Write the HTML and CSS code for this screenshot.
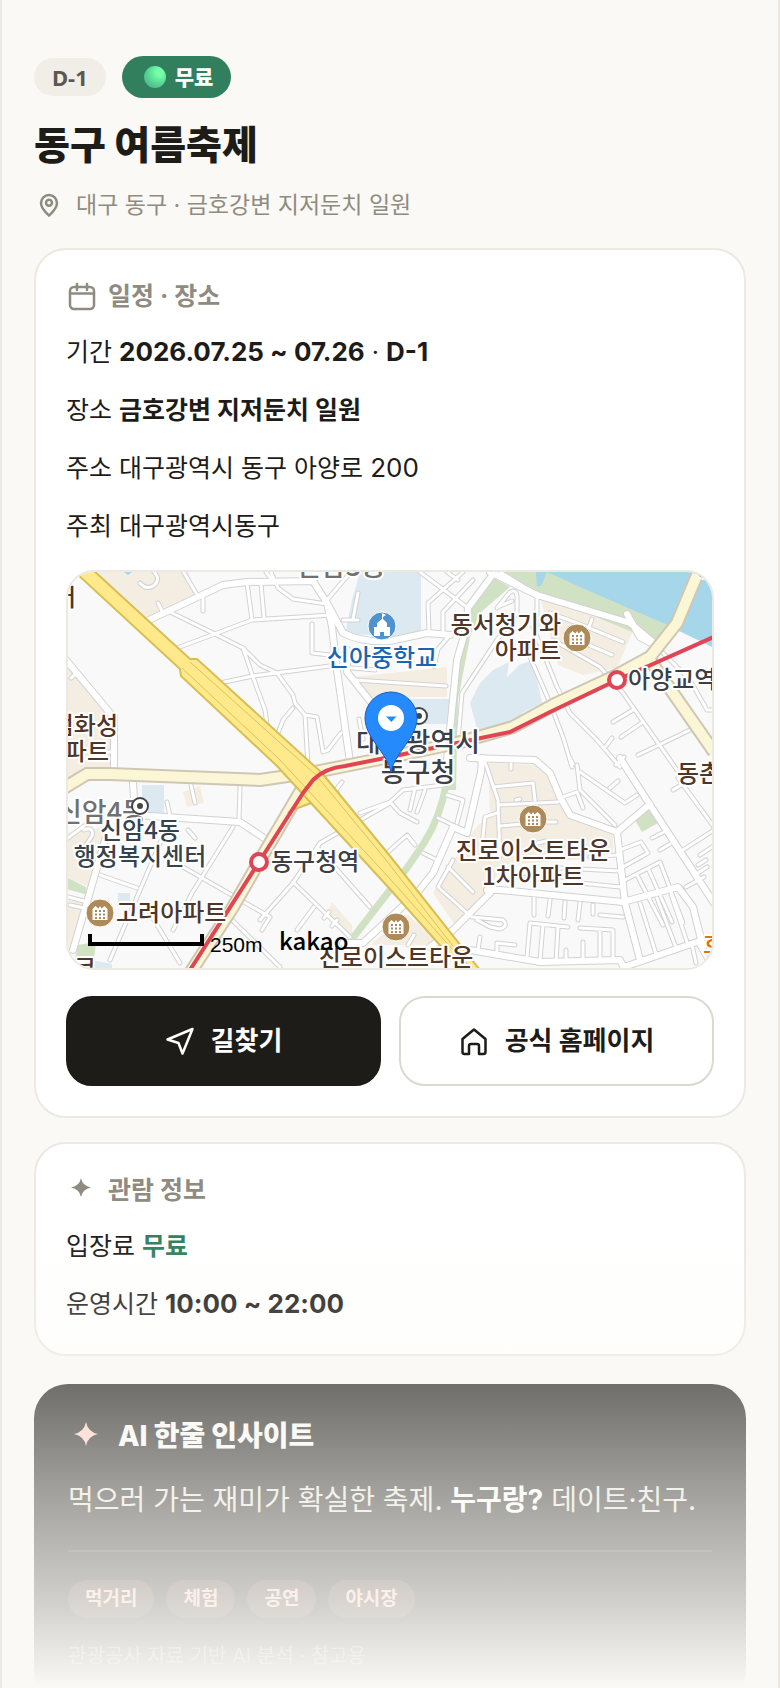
FILE: index.html
```html
<!DOCTYPE html>
<html lang="ko">
<head>
  <meta charset="UTF-8">
  <title>동구 여름축제</title>
  <meta name="viewport" content="width=device-width, initial-scale=1">
  <link rel="stylesheet" href="styles.css">
</head>
<body>
  <main class="app">
    <header class="hero">
      <div class="badges">
        <span class="badge">D-1</span>
        <span class="badge badge-free"><span class="orb"></span>무료</span>
      </div>
      <h1>동구 여름축제</h1>
      <p class="location">
        <svg class="icon-pin" viewBox="0 0 24 24" aria-hidden="true"><path d="M12 20.5c-2.4-2.2-6.4-6-6.4-10.100a6.400 6.400 0 0 1 12.800 0c0 4.100-4 7.900-6.400 10.100z"/><circle cx="12" cy="10.200" r="2.400"/></svg>
        대구 동구 · 금호강변 지저둔치 일원
      </p>
    </header>

    <section class="card">
      <h2>
        <svg class="icon" viewBox="0 0 30 30" aria-hidden="true"><rect x="4" y="6" width="24" height="22" rx="4"/><path d="M4 12.500h24M11 3v6M21 3v6"/></svg>
        일정 · 장소
      </h2>
      <p>기간 <b class="num">2026.07.25 ~ 07.26</b> · <b class="num">D-1</b></p>
      <p>장소 <b>금호강변 지저둔치 일원</b></p>
      <p>주소 대구광역시 동구 아양로 <span class="num">200</span></p>
      <p>주최 대구광역시동구</p>

      <div class="map">
        <svg viewBox="68 572 644 396" preserveAspectRatio="xMidYMid slice">
          <defs>
            <g id="lanes">
              <path d="M140 583q6 7 13 3q6-4 4-10l-5-7M183 571l13 22M203 595v16M158 603l4 8M168 611l45 22l30 15l17 17l17 8l16 22l2 8l10 12l3 50"/>
              <path d="M177 648l75-28l80-5M247 583l5 37M261 584l3 33M271 572l7 16l15 11l34 5M266 572l7 9M350 573l-23 27M220 683l33-7l77-10l45 4"/>
              <path d="M243 648l10 29l12 33l2 14M312 624v29l18 2M358 593l-5 26M343 620h15M293 708l-10 12l-5 13M305 715l12 2l6 35l5-2l13-17M355 680l91 6M359 719l4 20"/>
              <path d="M77 673l-6 5M114 752h-10M420 572l48 36M463 572l-35 31l1 29M473 580l-30 32v21M447 572l11 8M500 572l33 20M450 635l-12 14l-4 18"/>
              <path d="M537 593v34l-7 30l20 46l13 34l9 30M533 627l24 60l13 26l27 27l23 27M497 608l13-16q6-3 7 4v17l-20 27l-35 53l-4 47M512 601l-12 5"/>
              <path d="M550 613l27 10l46 19M592 619l-3 8M553 640l47 27l23 26l54 77M577 640l35 15M663 653l27 27l17 30h8M613 722l20-12M621 737l22-15M638 755l52-25M606 746l6-8M616 765l8-8"/>
              <path d="M240 787l-1 33M191 785l4 18M167 802l3 14M233 827l-41 66l-19 37M170 820l-30 70l-30 70M183 867l87 50l-8 13M100 875l37 13M145 905l35 58M227 915l53 52M390 803l-70 40l-27 40l-33 37M293 882l57 55M317 847l53 60M188 830l7 8M314 907l-17 23M329 912l-5 6M337 920l-5 6"/>
              <path d="M360 813l30-11l13-12l40-5M390 802l10 11l17 9M415 788l-5 22M425 790l-8 22M447 795l16 5l-6 23M438 818l25 12M387 853l20-18l8 10M423 853l12 6M453 860l-15 27l29 26M448 867l25 25M340 800l-4-10l6-8"/>
              <path d="M485 762l13 38l2 57M493 787l40-4l2 17M498 805l60-3M500 826l24-2M547 822h9M483 837l2-20l12-4M511 764v5M516 800l4-1M577 765l3 25l35 35M580 772l45 31l12-8M610 788l8-7M563 797l14-5l6 16M570 758l3 6"/>
              <path d="M673 790l41-25M678 778l36 49M683 850l31-20M652 838l12-6M660 850l10-6M620 850l21-8l7 11l-25 14M625 880l35-18l23 61M637 875l26 50M648 868l24 54M520 877l100 10M590 857l27-2M560 868l60 3M575 843l8-4M538 843l8-2M686 887l18-10M700 855l12-8M698 865l8-5M695 875l12-8"/>
              <path d="M534 898v17M550 900l-2 16M565 902l-1 16M580 903l-2 17M593 905v9M600 915l23 2M527 957l3-34l38 4M543 925l-3 35M558 927l-2 35M472 917l31 3q6 6-3 9l-10-2l-13-7M580 928l33 2v27M600 930v30M480 937l-2 13M497 955v-12l18 2M583 942v16M566 950v10"/>
              <path d="M640 903l17 54M657 898l20 52M671 894l16 48M697 942l15 26M692 945l4 18M408 945l6-10M70 905l14 3M68 897l16 4M84 830q10-4 8 6l-8 12M68 838l16-12"/>
            </g>
            <g id="streets">
              <path d="M147 621l76-36l24-3l66-1l14 22l5 24l5 43l13 92M327 603l16 30q20 10 47 8l37-8l23 2M347 650v22l27 34M66 660l44 53l4 4v53M491 577l-23 31l-1 17l-10 35l-7 70l-4 40"/>
              <path d="M490 572l47 23l93 28l30 25M627 614l13 23l15 8M133 783l2 32l105 7l27 18M105 840l-32 110M482 758l-1 14l-14 61l-14-6l-20 46l-16 20l-54 50h-20M487 890h13l123 12l55-15l15 20l10 40M490 893l-37 37l-23 17"/>
              <path d="M470 758l65 2l15 13l10 24l10 18l47 17l8 71l15 57M617 832l33-28M620 758l30 47l64 98M470 950l70 12l80-2l4 8M624 967l73-25"/>
            </g>
            <g id="avenues">
              <path d="M700 568l-23 55l-27 34l-33 18l-60 28l-44 24l-56 16l-67 14l-75 15l-55 8l-150-6h-23l-23 14M650 660l64 92M303 787l-43 73l-27 47l-43 66"/>
            </g>
            <g id="apartment">
              <circle r="14"/>
              <path d="M-7.500 7v-11l3-3l3 2.500l1.500-2.500l1.500 2.500l3-2.500l3 3v11z"/>
              <path class="windows" d="M-5-2h10M-5 1.500h10M-5 5h10"/>
            </g>
          </defs>

          <rect class="ground" x="60" y="560" width="660" height="420"/>
          <path class="block" d="M93 572h95l9 21l-50 27zM66 663l44 50l4 57l-48 14zM66 833l38-6v33l-14 27l-24-10zM66 900l20 3l-10 44l-10 13zM183 792l17-6l4 17l-17 4zM332 902l20 23v18l-25-30zM353 677l94-10v30h-75zM540 597l93 34l-16 37l-34 7l-25-10z"/>
          <path class="block" d="M488 763l52 2l13 15l7 20l12 20l41 15v22l-113 8l-10 28l-35 32l-22-32l7-13l38-55l12-8zM372 943l36-28l34 30h-70z"/>
          <path class="campus" d="M360 572h61v65l-76-3l7-34zM400 699h50v25h-50zM480 683l13-13l16-8l-2 15l12-12l14-5l9 43l-20 10v12l-44 7l-8-29zM142 785h22v30h-22zM118 893h12v14h-12zM92 960l20 4v6h-20z"/>
          <path class="park" d="M500 572h50l117 53l-10 17l-120-49zM492 577l18 10l-30 26l-10 24l-12 63l-2 90h-9l3-55l5-45l13-75zM635 820l15-12l8 15l-16 9zM66 877l20 10l2 8l-22-6zM78 945l18-3l-3 26h-20z"/>
          <path class="greenway" d="M446 785q-6 33-22 58l-17 25l-55 71"/>
          <path class="river" d="M547 572h167v76l-47-23l-87-38zM536 572h11l-6 14h-4zM124 572h8l-4 3z"/>

          <use class="lane-edge" href="#lanes"/>
          <use class="street-edge" href="#streets"/>
          <use class="lane" href="#lanes"/>
          <use class="street" href="#streets"/>
          <use class="avenue-edge" href="#avenues"/>
          <use class="avenue" href="#avenues"/>

          <path class="ramp" d="M290 811q10-4 30-11l-4-16l-14 12z"/>
          <path class="highway" d="M93 570l97 89h7l125 114l68 83l90 114h-18l-73-82l-112-122l-96-90l-1-7l-104-96z"/>
          <path class="highway-line" d="M190 662l126 113l70 85l84 108M182 668l98 92l112 121l76 86"/>
          <path class="subway" d="M716 636l-99 44l-67 32l-40 20l-53 11l-67 14l-45 9q-20 2-32 14l-10 13l-44 69l-69 108"/>
          <circle class="station" cx="259" cy="862" r="8"/>
          <circle class="station" cx="617" cy="680" r="8"/>

          <g class="label district">
            <text x="341" y="576" text-anchor="middle">신암3동</text>
            <text x="57" y="822">신암4동</text>
          </g>
          <g class="spot">
            <circle cx="140" cy="806" r="8"/><circle class="dot" cx="140" cy="806" r="3"/>
            <circle cx="419" cy="716" r="8"/><circle class="dot" cx="419" cy="716" r="3"/>
          </g>
          <g class="label">
            <text x="628" y="688">아양교역</text>
            <text x="271" y="870">동구청역</text>
            <text x="695" y="575">동구</text>
          </g>
          <g class="label office" text-anchor="middle">
            <text x="140" y="839">신암4동</text>
            <text x="140" y="865">행정복지센터</text>
          </g>
          <g class="label cityhall" text-anchor="middle">
            <text x="418" y="752">대구광역시</text>
            <text x="418" y="782">동구청</text>
          </g>
          <g class="label home">
            <text x="561" y="633" text-anchor="end">동서청기와</text>
            <text x="561" y="659" text-anchor="end">아파트</text>
            <text x="118" y="734" text-anchor="end">점화성</text>
            <text x="109" y="760" text-anchor="end">파트</text>
            <text x="76" y="606" text-anchor="end">어</text>
            <text x="116" y="921">고려아파트</text>
            <text x="396" y="966" text-anchor="middle">진로이스트타운</text>
            <text x="533" y="859" text-anchor="middle">진로이스트타운</text>
            <text x="533" y="885" text-anchor="middle">1차아파트</text>
            <text x="677" y="782">동촌</text>
            <text x="74" y="976">크</text>
          </g>
          <text class="label school-name" x="382" y="666" text-anchor="middle">신아중학교</text>
          <text class="label food" x="703" y="953">호</text>

          <g class="apartment">
            <use href="#apartment" transform="translate(577 638)"/>
            <use href="#apartment" transform="translate(533 819)"/>
            <use href="#apartment" transform="translate(396 927)"/>
            <use href="#apartment" transform="translate(100 913)"/>
          </g>
          <g class="school">
            <circle cx="382" cy="626" r="14"/>
            <path d="M374 636v-9h3v-4l5-4v-6l4 2l-3 2v2l4 4v4h3v9h-6v-4h-4v4z"/>
          </g>

          <path class="scale" d="M90 934v10h112v-10"/>
          <text class="scale-text" x="210" y="952">250m</text>
          <text class="brand" x="279" y="950">kakao</text>

          <path class="marker" d="M391 772c-4-20-26-34-26-54a26 26 0 0 1 52 0c0 20-22 34-26 54z"/>
          <circle class="marker-hole" cx="391" cy="718" r="13"/>
          <path class="marker-arrow" d="M386 716.500h10.500l-5.200 5.500z"/>
        </svg>
      </div>

      <div class="actions">
        <button class="btn btn-dark" type="button">
          <svg class="icon" viewBox="0 0 30 30" aria-hidden="true"><path d="M27.500 3L2.500 13.500l11 3.500l4 10.500z"/></svg>
          길찾기
        </button>
        <button class="btn" type="button">
          <svg class="icon" viewBox="0 0 30 30" aria-hidden="true"><path d="M3.500 13L15 3.500L26.500 13v13a2 2 0 0 1-2 2h-4.500v-8a2 2 0 0 0-2-2h-6a2 2 0 0 0-2 2v8h-4.500a2 2 0 0 1-2-2z"/></svg>
          공식 홈페이지
        </button>
      </div>
    </section>

    <section class="card">
      <h2>
        <svg class="icon star" viewBox="0 0 30 30" aria-hidden="true"><path d="M15 3q1.500 8 10 9.500q-8.500 1.500-10 9.500q-1.500-8-10-9.500q8.500-1.500 10-9.500z"/></svg>
        관람 정보
      </h2>
      <p>입장료 <b class="free">무료</b></p>
      <p>운영시간 <b class="num">10:00 ~ 22:00</b></p>
    </section>

    <section class="insight">
      <h2>
        <svg class="star" viewBox="0 0 36 36" aria-hidden="true"><path d="M18 4q2 10 12 12q-10 2-12 12q-2-10-12-12q10-2 12-12z"/></svg>
        AI 한줄 인사이트
      </h2>
      <p class="summary">먹으러 가는 재미가 확실한 축제. <b>누구랑?</b> 데이트·친구.</p>
      <ul class="tags">
        <li>먹거리</li>
        <li>체험</li>
        <li>공연</li>
        <li>야시장</li>
      </ul>
      <p class="source">관광공사 자료 기반 AI 분석 · 참고용</p>
    </section>
    <div class="fade"></div>
  </main>
</body>
</html>
```

FILE: styles.css
```css
:root {
  --bg: #faf9f5;
  --ink: #1e1c18;
  --muted: #8f8b80;
  --line: #ebe9e2;
  --green: #317f5d;
}

* { box-sizing: border-box; }

body {
  margin: 0;
  font-family: Inter, "Noto Sans CJK KR", sans-serif;
  font-size: 25px;
  line-height: 40px;
  background: var(--bg);
  color: var(--ink);
}

h1, h2, p, ul { margin: 0; }

b { font-weight: 700; }

.app {
  position: relative;
  height: 100vh;
  overflow: hidden;
  padding: 56px 32px 0;
  border: solid var(--line);
  border-width: 0 2px;
}

.badges {
  display: flex;
  align-items: center;
  gap: 16px;
}

.badge {
  padding: 0 18px;
  border-radius: 20px;
  background: #f0eee7;
  color: #5c5850;
  font-family: "Noto Sans", "Noto Sans CJK KR", sans-serif;
  font-size: 22px;
  font-weight: 700;
  line-height: 38px;
}

.badge-free {
  display: flex;
  align-items: center;
  gap: 9px;
  padding: 0 18px 0 22px;
  border-radius: 21px;
  background: var(--green);
  color: #fff;
  font-size: 21px;
  font-weight: 800;
  line-height: 42px;
}

.orb {
  width: 22px;
  height: 22px;
  border-radius: 50%;
  background: radial-gradient(circle at 70% 30%, #74ffa8 15%, #58d894 50%, #4b9f8b 100%);
}

h1 {
  margin-top: 22px;
  font-size: 39px;
  font-weight: 800;
  line-height: 50px;
}

.location {
  display: flex;
  align-items: center;
  gap: 12px;
  margin: 18px 0 26px;
  color: var(--muted);
  font-size: 23px;
  line-height: 34px;
}

.icon-pin, .icon {
  width: 30px;
  height: 30px;
  fill: none;
  stroke: currentColor;
  stroke-width: 2;
  stroke-linejoin: round;
  stroke-linecap: round;
}

.icon { stroke-width: 2.500; }

.card {
  display: flex;
  flex-direction: column;
  gap: 18px;
  margin-bottom: 24px;
  padding: 28px 30px 30px;
  border: 2px solid var(--line);
  border-radius: 32px;
  background: #fff;
}

.card h2 {
  display: flex;
  align-items: center;
  gap: 12px;
  color: var(--muted);
  font-size: 25px;
  font-weight: 700;
  line-height: 36px;
}

.star, .icon.star {
  fill: currentColor;
  stroke: none;
}

.num { font-size: 26px; }

.free { color: var(--green); }

/* map */
.map {
  margin: 6px 0 8px;
  border: 2px solid var(--line);
  border-radius: 28px;
  overflow: hidden;
}

.map svg {
  display: block;
  width: 100%;
}

.ground { fill: #f9f9f9; }
.block { fill: #f4ede2; }
.campus { fill: #dce9f1; }
.park { fill: #d1e2c4; }
.river { fill: #a5d6ea; }

.greenway, .lane, .lane-edge, .street, .street-edge,
.avenue, .avenue-edge, .highway-line, .subway, .scale {
  fill: none;
  stroke-linejoin: round;
}

.lane, .lane-edge, .street, .street-edge { stroke-linecap: round; }

.greenway { stroke: #d1e2c4; stroke-width: 7; }
.lane-edge { stroke: #d2d2d2; stroke-width: 5; }
.lane { stroke: #fff; stroke-width: 3; }
.street-edge { stroke: #d2d2d2; stroke-width: 8; }
.street { stroke: #fff; stroke-width: 6; }
.avenue-edge { stroke: #cfc7b4; stroke-width: 14; }
.avenue { stroke: #fbf6d5; stroke-width: 10; }
.highway, .ramp { fill: #ffe98b; stroke: #d6bf55; stroke-width: 2; }
.highway-line { stroke: #d9c459; stroke-width: 1; }
.subway { stroke: #e04555; stroke-width: 4; }
.station { fill: #fff; stroke: #e04555; stroke-width: 4; }

.label {
  fill: #3c4046;
  stroke: #fff;
  stroke-width: 4;
  stroke-linejoin: round;
  paint-order: stroke;
  font-family: "Noto Sans CJK KR", sans-serif;
  font-size: 24px;
  font-weight: 500;
}

.home { fill: #4f3627; }
.office { fill: #35434d; }
.school-name { fill: #1a65b3; }
.food { fill: #e8700c; }
.district { fill: #707070; font-size: 27px; }
.cityhall { font-size: 27px; }

.spot { fill: #fff; stroke: #444; stroke-width: 2; }
.spot .dot { fill: #444; stroke: none; }

.apartment { fill: #fff; }
#apartment circle { fill: #ad8a58; stroke: #fff; stroke-width: 1; }
#apartment .windows { fill: none; stroke: #ad8a58; stroke-width: 2; stroke-dasharray: 2 2; }
.school { fill: #fff; }
.school circle { fill: #4f92cd; stroke: #fff; stroke-width: 1; }

.scale { stroke: #000; stroke-width: 4; stroke-linejoin: miter; }
.scale-text { font-family: "Liberation Sans", sans-serif; font-size: 21px; }
.brand { font-family: "Noto Sans CJK KR", sans-serif; font-size: 24px; font-weight: 500; }

.marker { fill: #258bfc; stroke: #1b5fc6; stroke-width: 1; }
.marker-hole { fill: #fff; }
.marker-arrow { fill: #258bfc; }

.actions {
  display: grid;
  grid-template-columns: 1fr 1fr;
  gap: 18px;
}

.btn {
  display: flex;
  align-items: center;
  justify-content: center;
  gap: 16px;
  height: 90px;
  padding: 0;
  border: 2px solid #dcd9cf;
  border-radius: 26px;
  background: #fff;
  color: var(--ink);
  font: inherit;
  font-size: 26px;
  font-weight: 700;
  cursor: pointer;
}

.btn-dark {
  border-color: var(--ink);
  background: var(--ink);
  color: #fff;
}

/* AI insight */
.insight {
  margin-top: 28px;
  padding: 32px 34px;
  border-radius: 34px;
  background: var(--ink);
  color: #e8e6dc;
}

.insight h2 {
  display: flex;
  align-items: center;
  gap: 14px;
  color: #faf9f5;
  font-size: 28px;
  font-weight: 800;
}

.insight .star {
  width: 36px;
  height: 36px;
  color: #ffcdbd;
}

.summary {
  margin: 20px 0 26px;
  font-size: 28px;
  line-height: 48px;
}

.summary b { color: #fff; }

.tags {
  display: flex;
  gap: 12px;
  padding: 28px 0 22px;
  border-top: 2px solid #3a3833;
  list-style: none;
}

.tags li {
  padding: 0 17px;
  border-radius: 19px;
  background: #47352d;
  color: #ffcdbd;
  font-size: 19px;
  font-weight: 700;
  line-height: 38px;
}

.source {
  color: #8f8b80;
  font-size: 20px;
  line-height: 32px;
}

.fade {
  position: absolute;
  inset: auto 0 0;
  height: 456px;
  background: linear-gradient(rgba(250, 249, 245, 0), rgba(250, 249, 245, 0.17) 16%, rgba(250, 249, 245, 0.37) 33%, rgba(250, 249, 245, 0.62) 59%, rgba(250, 249, 245, 0.81) 81%, #faf9f5);
}
```
